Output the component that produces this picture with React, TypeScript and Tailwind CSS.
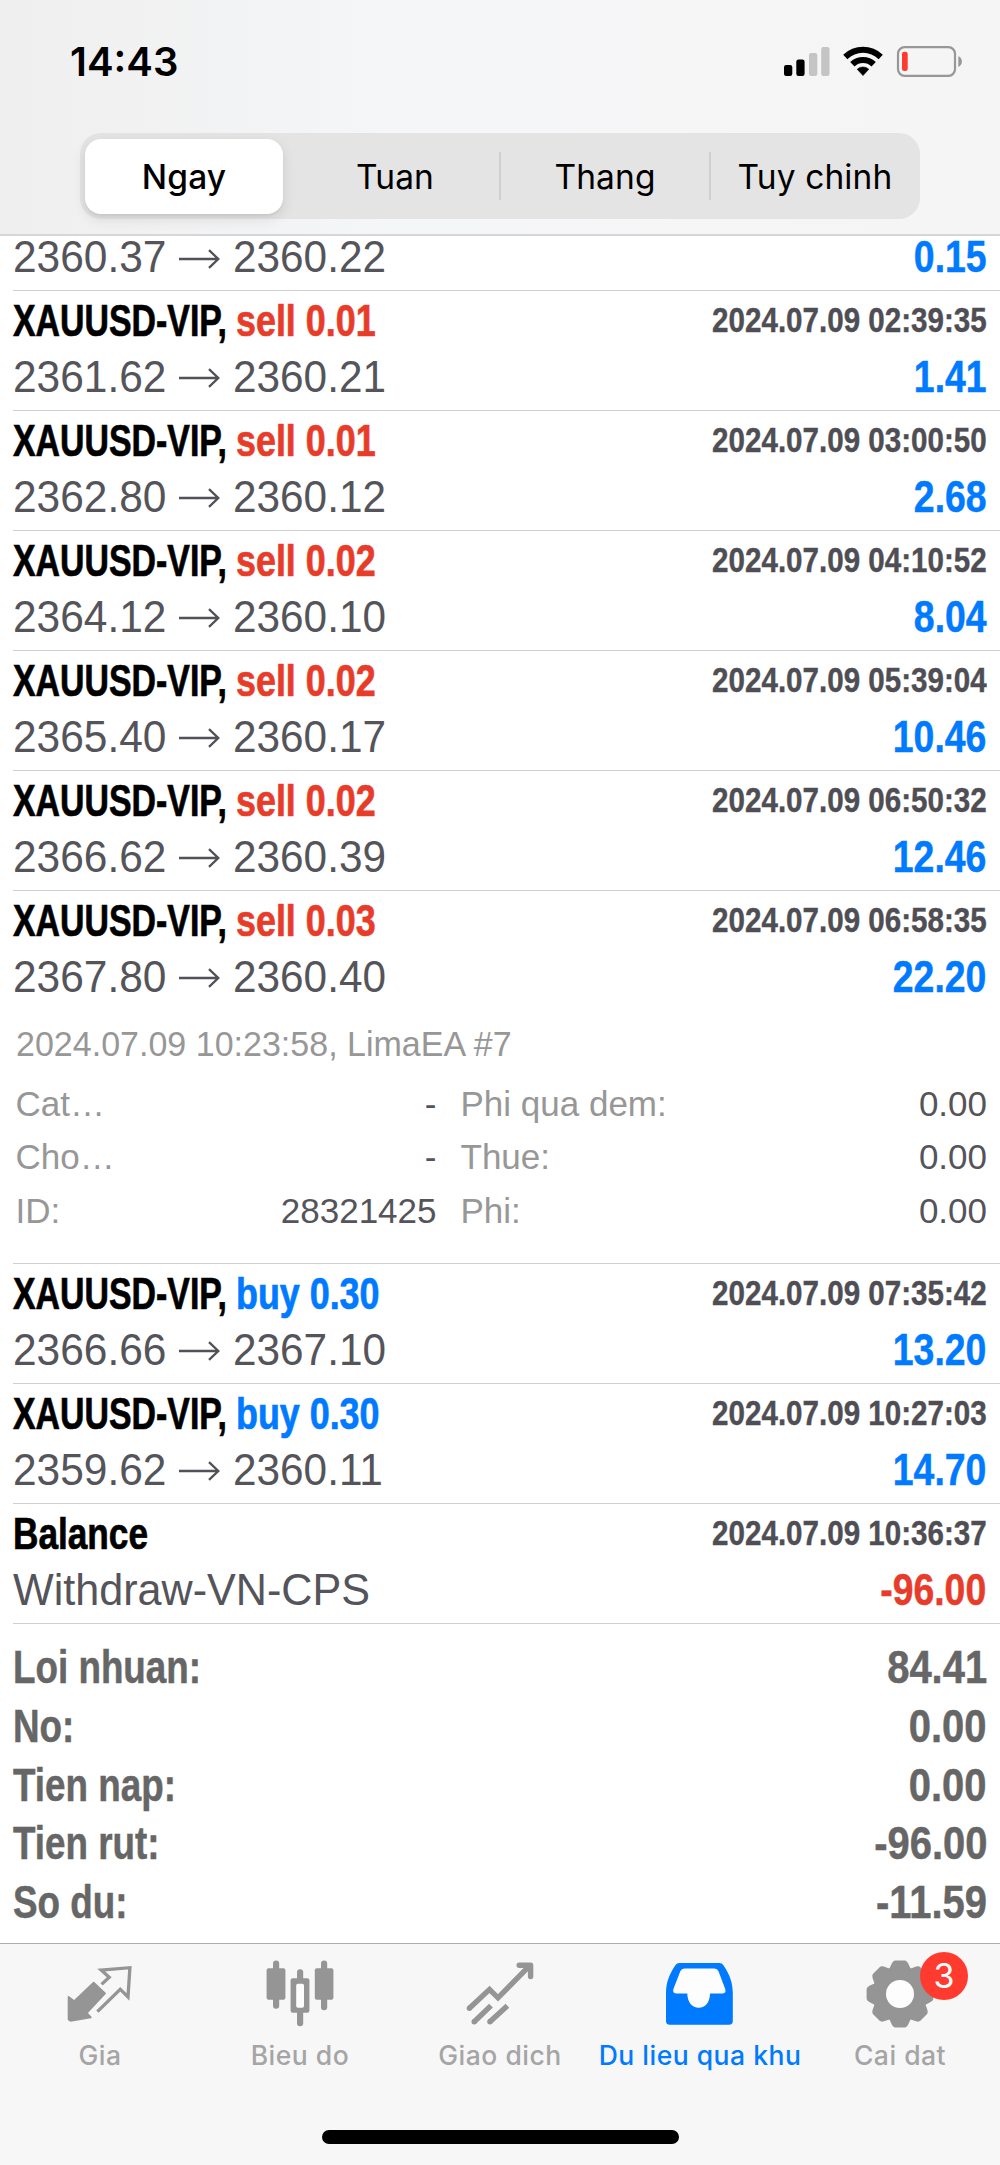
import type { ReactNode } from "react";

type Tone = "sell" | "buy";

type Deal = {
  tone: Tone;
  side: string;
  time: string;
  from: string;
  to: string;
  profit: string;
  details?: boolean;
};

const deals: Deal[] = [
  { tone: "sell", side: "sell 0.01", time: "2024.07.09 02:39:35", from: "2361.62", to: "2360.21", profit: "1.41" },
  { tone: "sell", side: "sell 0.01", time: "2024.07.09 03:00:50", from: "2362.80", to: "2360.12", profit: "2.68" },
  { tone: "sell", side: "sell 0.02", time: "2024.07.09 04:10:52", from: "2364.12", to: "2360.10", profit: "8.04" },
  { tone: "sell", side: "sell 0.02", time: "2024.07.09 05:39:04", from: "2365.40", to: "2360.17", profit: "10.46" },
  { tone: "sell", side: "sell 0.02", time: "2024.07.09 06:50:32", from: "2366.62", to: "2360.39", profit: "12.46" },
  { tone: "sell", side: "sell 0.03", time: "2024.07.09 06:58:35", from: "2367.80", to: "2360.40", profit: "22.20", details: true },
  { tone: "buy", side: "buy 0.30", time: "2024.07.09 07:35:42", from: "2366.66", to: "2367.10", profit: "13.20" },
  { tone: "buy", side: "buy 0.30", time: "2024.07.09 10:27:03", from: "2359.62", to: "2360.11", profit: "14.70" },
];

const totals = [
  ["Loi nhuan:", "84.41"],
  ["No:", "0.00"],
  ["Tien nap:", "0.00"],
  ["Tien rut:", "-96.00"],
  ["So du:", "-11.59"],
];

function StatusBar() {
  return (
    <div className="flex h-[133px] justify-between pt-[36px] pr-[36px] pl-[70px]">
      <span className="font-[Inter,sans-serif] text-[40px] leading-[51px] font-semibold">14:43</span>
      <svg width="182" height="40" viewBox="782 42 182 40" className="mt-[6px]">
        <rect x="784" y="65" width="8.3" height="11" rx="2.2" />
        <rect x="796.3" y="59.5" width="8.3" height="16.5" rx="2.2" />
        <rect x="809" y="53" width="8.3" height="23" rx="2.2" fill="#c4c4c4" />
        <rect x="821.2" y="47" width="8.3" height="29" rx="2.2" fill="#c4c4c4" />
        <path d="M843.2 54.8A28.5 28.5 0 0 1 882.8 54.8L878.6 59.2A22.4 22.4 0 0 0 847.4 59.2Z" />
        <path d="M850.2 62A18.6 18.6 0 0 1 875.8 62L871.5 66.4A12.5 12.5 0 0 0 854.5 66.4Z" />
        <path d="M857.2 69.2A8.6 8.6 0 0 1 868.8 69.2L863 75.6Z" strokeWidth="0.6" stroke="#000" strokeLinejoin="round" />
        <rect x="898" y="47.2" width="57" height="28.6" rx="6.5" fill="none" stroke="#979797" strokeWidth="2.2" />
        <path d="M958.3 56.3c4.8 1.6 4.8 9 0 10.6Z" fill="#979797" />
        <rect x="902" y="51.8" width="5.7" height="19.2" rx="2.2" fill="#ff3b30" />
      </svg>
    </div>
  );
}

function Segment({ label, active, divider }: { label: string; active?: boolean; divider?: boolean }) {
  return (
    <div className="relative flex flex-1 items-center justify-center">
      {divider && <span className="absolute top-[19px] right-[-1px] h-[48px] w-[2px] bg-[#cfcfd1]" />}
      {active ? (
        <span className="-ml-[2px] flex h-[75px] w-[198px] items-center justify-center rounded-[16px] bg-white pt-[2px] font-medium shadow-[0_5px_14px_rgba(0,0,0,0.1),0_2px_3px_rgba(0,0,0,0.05)]">
          {label}
        </span>
      ) : (
        <span className="pt-[2px]">{label}</span>
      )}
    </div>
  );
}

function Header() {
  return (
    <header className="h-[236px] shrink-0 border-b-2 border-[#d6d6d8] bg-linear-to-r from-[#efefef] via-[#f5f6f8] via-40% to-[#f6f5f5]">
      <StatusBar />
      <nav className="mx-[80px] flex h-[86px] rounded-[21px] bg-[#e4e4e5] font-[Inter,sans-serif] text-[33.5px] tracking-[0.1px]">
        <Segment label="Ngay" active />
        <Segment label="Tuan" divider />
        <Segment label="Thang" divider />
        <Segment label="Tuy chinh" />
      </nav>
    </header>
  );
}

function LongArrow() {
  return (
    <svg width="42" height="22" viewBox="0 0 42 22" fill="none" stroke="#515157" strokeWidth="2.3" className="mt-[3px] shrink-0">
      <path d="M0 11H39.5M30 2.2L39.3 11L30 19.8" />
    </svg>
  );
}

function Value({ children, className }: { children: ReactNode; className: string }) {
  return (
    <span
      className={`origin-right scale-x-[0.84] text-[44.5px] font-bold whitespace-nowrap [-webkit-text-stroke:0.5px] ${className}`}
    >
      {children}
    </span>
  );
}

function Prices({ from, to, profit, compact }: { from: string; to: string; profit: string; compact?: boolean }) {
  return (
    <div
      className={`flex shrink-0 items-center justify-between pr-[13.5px] ${
        compact ? "h-[42px] leading-[42px]" : "h-[61px] leading-[61px]"
      }`}
    >
      <div className="flex items-center text-[44px] text-[#54545a]">
        <span className="w-[166px] origin-left scale-x-[0.965]">{from}</span>
        <LongArrow />
        <span className="ml-[12px] origin-left scale-x-[0.962]">{to}</span>
      </div>
      <Value className="text-[#007aff]">{profit}</Value>
    </div>
  );
}

function Time({ children }: { children: ReactNode }) {
  return (
    <span className="mt-[-1.5px] origin-right scale-x-[0.838] text-[35.3px] font-bold whitespace-nowrap text-[#4e4e54] [-webkit-text-stroke:0.4px]">
      {children}
    </span>
  );
}

function Details() {
  const rows = [
    ["Cat…", "-", "Phi qua dem:", "0.00"],
    ["Cho…", "-", "Thue:", "0.00"],
    ["ID:", "28321425", "Phi:", "0.00"],
  ];
  return (
    <div className="h-[253px] pt-[10px] pr-[13px] pl-[2.5px] text-[35px] leading-[53.4px] text-[#979797]">
      <div className="mb-[6.5px] origin-left scale-x-[0.972] whitespace-nowrap">2024.07.09 10:23:58, LimaEA #7</div>
      {rows.map(([a, b, c, d]) => (
        <div key={a} className="flex">
          <span className="w-[200px]">{a}</span>
          <span className="w-[221px] text-right text-[#54545a]">{b}</span>
          <span className="ml-[24px] flex-1">{c}</span>
          <span className="text-[#54545a]">{d}</span>
        </div>
      ))}
    </div>
  );
}

function DealRow({ deal }: { deal: Deal }) {
  return (
    <div className="ml-[13px] border-b border-[#d0d0d0] pt-[5px] pb-[3px]">
      <div className="flex h-[50px] justify-between pr-[13.5px] leading-[50px]">
        <div className="flex text-[44px] font-bold whitespace-nowrap [-webkit-text-stroke:0.7px]">
          <span className="w-[223px] origin-left scale-x-[0.77]">XAUUSD-VIP,</span>
          <span className={`origin-left scale-x-[0.815] ${deal.tone === "sell" ? "text-[#e83c2b]" : "text-[#007aff]"}`}>
            {deal.side}
          </span>
        </div>
        <Time>{deal.time}</Time>
      </div>
      <Prices from={deal.from} to={deal.to} profit={deal.profit} />
      {deal.details && <Details />}
    </div>
  );
}

function BalanceRow() {
  return (
    <div className="ml-[13px] border-b border-[#d0d0d0] pt-[5px] pb-[3px]">
      <div className="flex h-[50px] justify-between pr-[13.5px] leading-[50px]">
        <span className="origin-left scale-x-[0.8] text-[44px] font-bold [-webkit-text-stroke:0.7px]">Balance</span>
        <Time>2024.07.09 10:36:37</Time>
      </div>
      <div className="flex h-[61px] justify-between pr-[13.5px] leading-[61px]">
        <span className="origin-left scale-x-[0.98] text-[44px] text-[#54545a]">Withdraw-VN-CPS</span>
        <Value className="text-[#e83c2b]">-96.00</Value>
      </div>
    </div>
  );
}

function Totals() {
  return (
    <div className="px-[13px] pt-[14px] text-[46px] leading-[58.8px] font-bold text-[#666] [-webkit-text-stroke:0.5px]">
      {totals.map(([label, value]) => (
        <div key={label} className="flex justify-between">
          <span className="origin-left scale-x-[0.8]">{label}</span>
          <span className="origin-right scale-x-[0.868]">{value}</span>
        </div>
      ))}
    </div>
  );
}

function QuotesIcon() {
  return (
    <svg width="72" height="72" viewBox="0 0 72 72">
      <path
        d="M4.6 41L10.2 45.2L29.7 26.7L41 37.4L22.8 57L26.8 61.4L6.6 64.8L4.6 63.4Z"
        fill="#959595"
        stroke="#959595"
        strokeWidth="1.8"
        strokeLinejoin="round"
      />
      <path d="M37.6 28.4L45.2 21.2L37.2 14L65.9 11.7L64 41L56.2 33.2L33.4 55.6" fill="none" stroke="#959595" strokeWidth="3.3" />
    </svg>
  );
}

function ChartIcon() {
  return (
    <svg width="72" height="72" viewBox="0 0 72 72" fill="#959595">
      <rect x="9" y="4.5" width="6.2" height="48.2" rx="3" />
      <rect x="2.6" y="12.2" width="18.8" height="31.5" rx="2" />
      <rect x="33" y="13.3" width="6.2" height="57" rx="3" />
      <rect x="26.6" y="22.2" width="18.8" height="34.6" rx="2" />
      <rect x="32.2" y="27.7" width="7.8" height="24" rx="1.8" fill="#fdfdfd" />
      <rect x="57" y="4.5" width="6.2" height="49.8" rx="3" />
      <rect x="50.8" y="12.2" width="18.6" height="31.5" rx="2" />
    </svg>
  );
}

function TradeIcon() {
  return (
    <svg width="72" height="72" viewBox="0 0 72 72" fill="none" stroke="#959595" strokeWidth="5.4">
      <path d="M5.4 52.3L25.5 33.4L34 41.8L66 9.3" strokeLinejoin="miter" />
      <path d="M55.2 9.2H66.6V20.6" strokeLinecap="round" strokeLinejoin="round" />
      <path d="M10.2 65.8L27 49.6M25.9 65.8L43.4 49.7" />
      <g fill="#959595" stroke="none">
        <circle cx="5.4" cy="52.3" r="2.7" />
        <circle cx="10.2" cy="65.8" r="2.7" />
        <circle cx="25.9" cy="65.8" r="2.7" />
      </g>
    </svg>
  );
}

function HistoryIcon() {
  return (
    <svg width="72" height="72" viewBox="0 0 72 72">
      <path
        d="M15.5 7H55.2Q58 7 59.6 9.4C66 19 68.8 27 68.8 37V65Q68.8 68.8 65 68.8H5.8Q2 68.8 2 65V37C2 27 4.8 19 11.2 9.4Q12.8 7 15.5 7Z"
        fill="#007aff"
      />
      <path
        d="M20.5 12.4H50.5Q53.3 12.4 54.4 15L61.2 33Q62.4 37.4 58.8 37.4H46C46 46 41.5 51.7 34.8 51.7S23.3 46 23.3 37.4H12Q8.3 37.4 9.4 33L16.4 15Q17.6 12.4 20.5 12.4Z"
        fill="#fdfdfd"
      />
    </svg>
  );
}

function SettingsIcon() {
  return (
    <svg width="72" height="72" viewBox="0 0 72 72">
      <g transform="translate(36 38)" fill="#959595" stroke="#959595" strokeWidth="3" strokeLinejoin="round">
        <circle r="25" />
        {[0, 45, 90, 135, 180, 225, 270, 315].map((angle) => (
          <path key={angle} transform={`rotate(${angle})`} d="M-10.5 -23.5C-7.8 -25 -7.4 -31.9 -4.6 -31.9H4.6C7.4 -31.9 7.8 -25 10.5 -23.5Z" />
        ))}
      </g>
      <circle cx="36" cy="38" r="14" fill="#fdfdfd" />
    </svg>
  );
}

function Tab({ icon, label, active, badge }: { icon: ReactNode; label: string; active?: boolean; badge?: string }) {
  return (
    <div className="relative flex w-[200px] flex-col items-center pt-[12px]">
      {icon}
      {badge && (
        <span className="absolute top-[7.5px] left-[120px] flex h-[48px] w-[48px] items-center justify-center rounded-full bg-[#ff3b30] text-[34px] leading-none text-white">
          {badge}
        </span>
      )}
      <span
        className={`mt-[7px] text-[26.5px] leading-[40px] font-medium tracking-[0.5px] whitespace-nowrap ${
          active ? "text-[#007aff]" : "text-[#a5a5a5]"
        }`}
      >
        {label}
      </span>
    </div>
  );
}

function TabBar() {
  return (
    <footer className="flex h-[222px] shrink-0 flex-col border-t border-[#adadad] bg-[#f7f7f7] font-[Inter,sans-serif]">
      <div className="flex flex-1">
        <Tab icon={<QuotesIcon />} label="Gia" />
        <Tab icon={<ChartIcon />} label="Bieu do" />
        <Tab icon={<TradeIcon />} label="Giao dich" />
        <Tab icon={<HistoryIcon />} label="Du lieu qua khu" active />
        <Tab icon={<SettingsIcon />} label="Cai dat" badge="3" />
      </div>
      <div className="mx-auto mb-[21.5px] h-[13.5px] w-[357px] rounded-full bg-black" />
    </footer>
  );
}

export default function App() {
  return (
    <div className="flex h-[2165px] w-[1000px] flex-col overflow-hidden bg-white font-['Liberation_Sans',Arial,sans-serif] text-black">
      <Header />
      <main className="min-h-0 flex-1">
        <div className="ml-[13px] h-[55px] border-b border-[#d0d0d0]">
          <Prices from="2360.37" to="2360.22" profit="0.15" compact />
        </div>
        {deals.map((deal) => (
          <DealRow key={deal.time} deal={deal} />
        ))}
        <BalanceRow />
        <Totals />
      </main>
      <TabBar />
    </div>
  );
}
